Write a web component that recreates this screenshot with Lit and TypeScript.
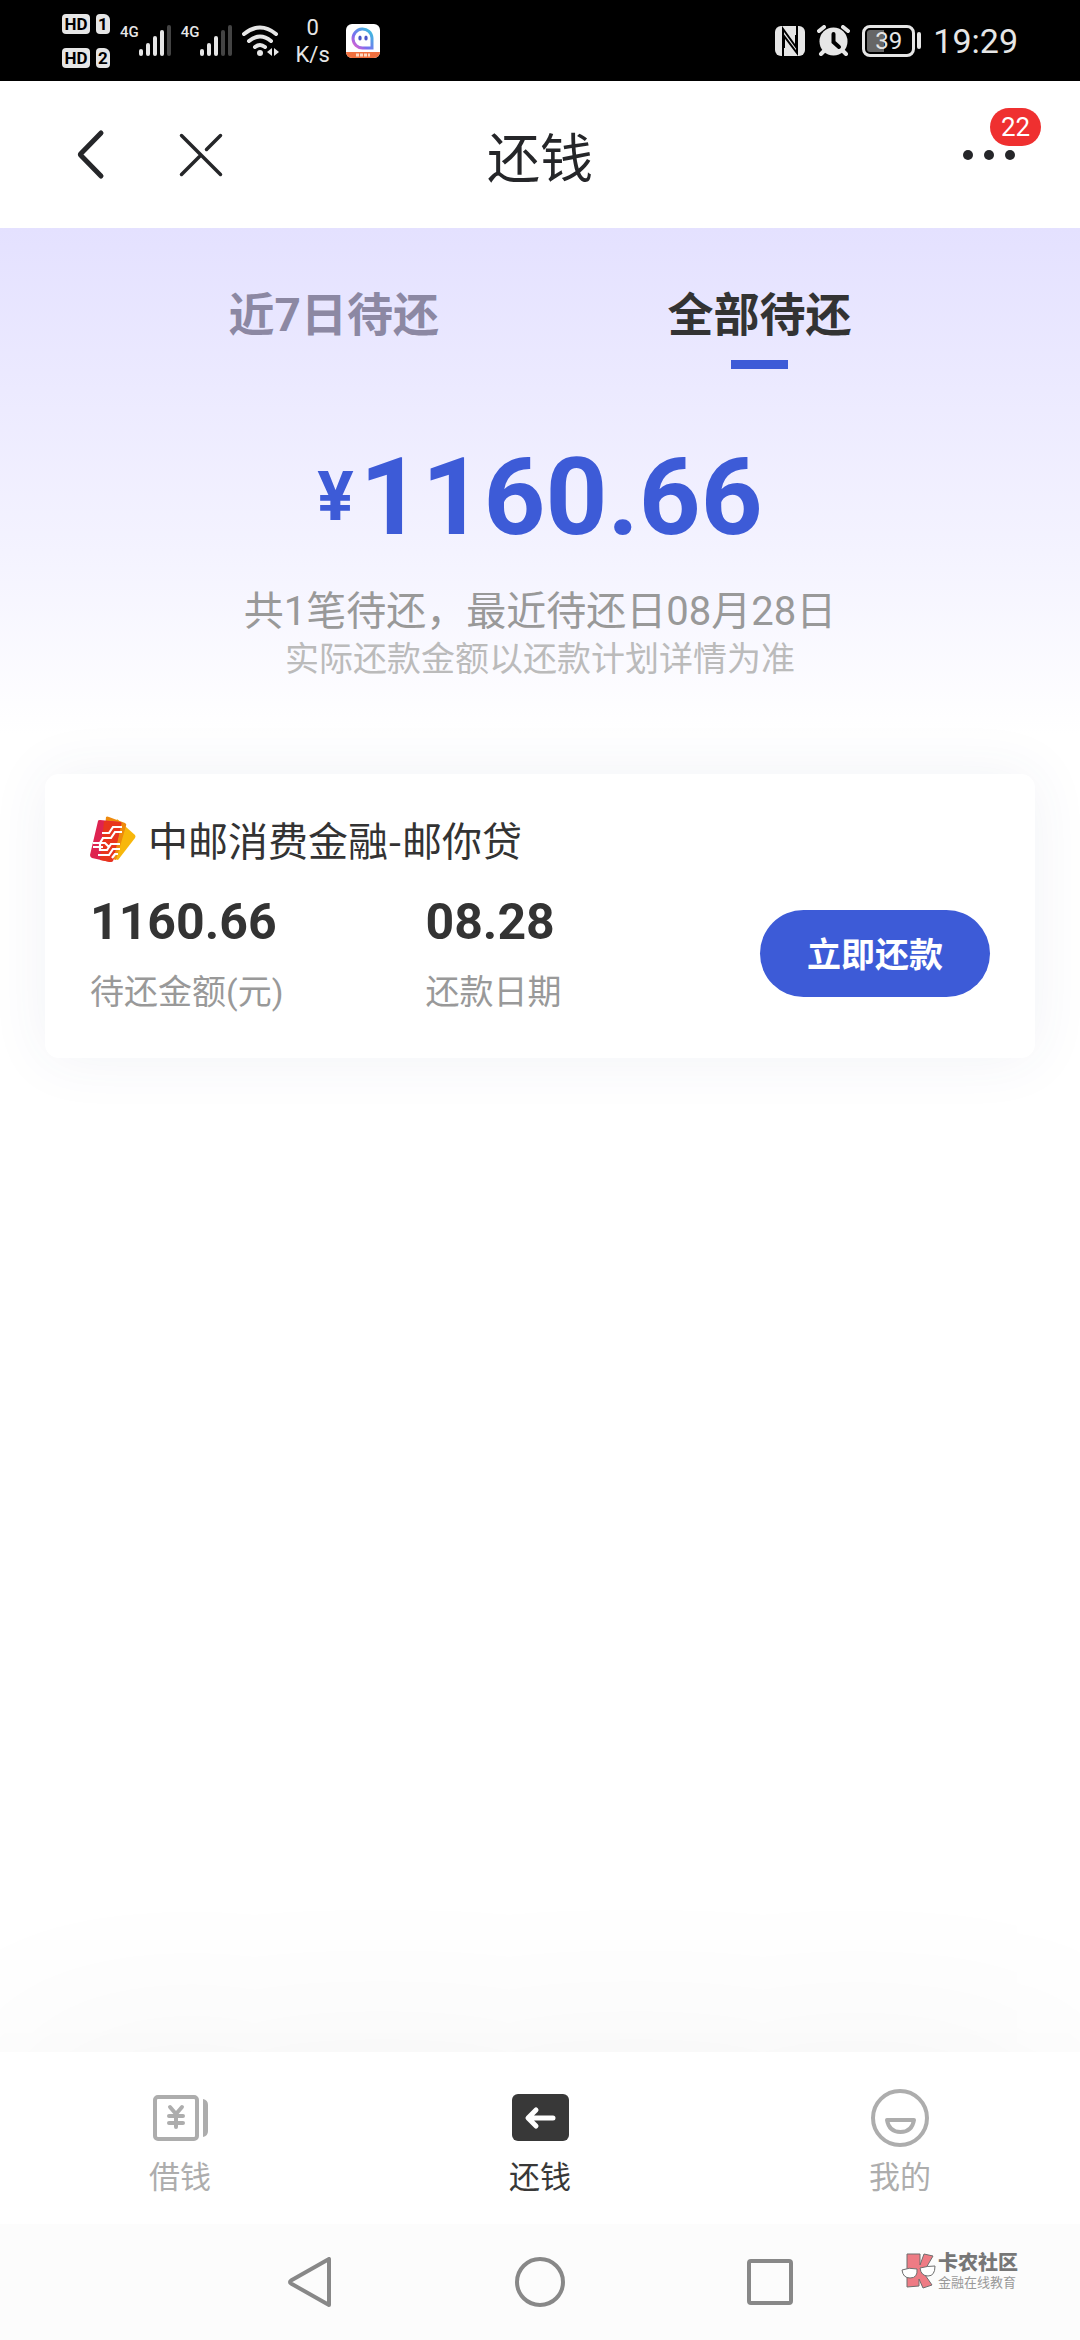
import { LitElement, html, css, svg } from "lit";
import { customElement, property, state } from "lit/decorators.js";
import { classMap } from "lit/directives/class-map.js";

const FONT = css`"Roboto", "Noto Sans CJK SC", sans-serif`;
const CJK = css`"Noto Sans CJK SC", sans-serif`;

@customElement("status-bar")
class StatusBar extends LitElement {
  static styles = css`
    :host {
      display: flex;
      align-items: center;
      justify-content: space-between;
      height: 81px;
      padding: 0 62px;
      background: #000;
      color: #e6e6e6;
      font-family: ${FONT};
    }
    .group { display: flex; align-items: center; }
    .left { gap: 10px; }
    .right { gap: 12px; }
    svg { display: block; flex: none; }
    .sims { display: grid; gap: 14px; }
    .sim { display: flex; gap: 6px; }
    .chip {
      display: block;
      height: 20px;
      border-radius: 4px;
      background: #e6e6e6;
      color: #000;
      font-size: 17px;
      line-height: 20px;
      font-weight: 700;
      text-align: center;
    }
    .hd { width: 28px; }
    .slot { width: 14px; border-top-right-radius: 6px; }
    .signal { display: flex; align-items: center; }
    .gen {
      font-weight: 500;
      font-size: 15px;
      line-height: 30px;
      height: 48px;
    }
    .speed {
      display: grid;
      text-align: center;
      font-size: 22px;
      line-height: 27px;
      padding: 0 6px;
    }
    .battery { display: flex; align-items: center; gap: 2px; }
    .cell {
      box-sizing: border-box;
      width: 53px;
      height: 32px;
      border: 3px solid #e6e6e6;
      border-radius: 8px;
      padding: 2px;
    }
    .charge {
      display: block;
      height: 22px;
      border-radius: 3px;
      background: linear-gradient(90deg, #666 39%, #000 39%);
      text-align: center;
      font-size: 24px;
      line-height: 23px;
    }
    .tip { width: 4px; height: 17px; border-radius: 2px; background: #e6e6e6; }
    .time { font-size: 34px; line-height: 50px; }
  `;

  private bars(active: number) {
    const tops = [24, 18, 11, 5, 0];
    return html`<svg width="32" height="31" viewBox="0 0 32 31" aria-hidden="true">
      ${tops.map(
        (t, i) => svg`<rect x=${i * 7} y=${t} width="4" height=${31 - t} rx="2"
          fill=${i < active ? "#e6e6e6" : "#444"}></rect>`
      )}
    </svg>`;
  }

  render() {
    return html`
      <div class="group left">
        <div class="sims">
          <div class="sim"><span class="chip hd">HD</span><span class="chip slot">1</span></div>
          <div class="sim"><span class="chip hd">HD</span><span class="chip slot">2</span></div>
        </div>
        <div class="signal"><span class="gen">4G</span>${this.bars(4)}</div>
        <div class="signal"><span class="gen">4G</span>${this.bars(3)}</div>
        <svg width="38" height="32" viewBox="0 0 38 32" fill="none" stroke="#e6e6e6" stroke-width="4" stroke-linecap="round" aria-hidden="true">
          <path d="M2 9Q18 -4 34 9M7 16Q18 7 29 16M13 22Q18 18 23 22"></path>
          <circle cx="18" cy="28" r="3" fill="#e6e6e6" stroke="none"></circle>
          <path d="M25 27l5-4v8zM32 23v8l5-4z" fill="#e6e6e6" stroke="none"></path>
        </svg>
        <div class="speed"><span>0</span><span>K/s</span></div>
        <svg width="34" height="34" viewBox="0 0 34 34" aria-hidden="true">
          <defs>
            <linearGradient id="ring" x1="0" y1="1" x2="1" y2="0">
              <stop offset="0" stop-color="#f05fc8"></stop>
              <stop offset=".35" stop-color="#7b6df0"></stop>
              <stop offset="1" stop-color="#35c5dc"></stop>
            </linearGradient>
          </defs>
          <rect width="34" height="34" rx="6" fill="#fff"></rect>
          <path d="M26 24V14A9.500 9.500 0 1 0 17 24H26Z" fill="none" stroke="url(#ring)" stroke-width="3"></path>
          <ellipse cx="14" cy="14" rx="1.700" ry="2.500" fill="#4a55c8"></ellipse>
          <ellipse cx="20" cy="14" rx="1.700" ry="2.500" fill="#4a55c8"></ellipse>
          <path d="M0 28H34A6 6 0 0 1 28 34H6A6 6 0 0 1 0 28Z" fill="#f0703f"></path>
          <path d="M10 31h14" stroke="#fbd9c4" stroke-width="3" stroke-dasharray="3 1"></path>
        </svg>
      </div>
      <div class="group right">
        <svg width="30" height="30" viewBox="0 0 30 30" aria-hidden="true">
          <rect width="30" height="30" rx="6" fill="#e6e6e6"></rect>
          <path d="M8 30V3L21 21V9M22 0V27L9 10V22" fill="none" stroke="#000" stroke-width="2"></path>
        </svg>
        <svg width="33" height="31" viewBox="0 0 33 31" aria-hidden="true">
          <circle cx="16.500" cy="16.500" r="14" fill="#e6e6e6"></circle>
          <path d="M2 6l5-4M31 6l-5-4M7 26l-3 3M26 26l3 3" stroke="#e6e6e6" stroke-width="4" stroke-linecap="round"></path>
          <path d="M16.500 9v8l5.500 5" fill="none" stroke="#000" stroke-width="4" stroke-linecap="round"></path>
        </svg>
        <div class="battery">
          <div class="cell"><span class="charge">39</span></div>
          <span class="tip"></span>
        </div>
        <span class="time">19:29</span>
      </div>
    `;
  }
}

@customElement("title-bar")
class TitleBar extends LitElement {
  @property() heading = "";
  @property({ type: Number }) unread = 0;

  static styles = css`
    :host {
      display: grid;
      grid-template-columns: 1fr auto 1fr;
      align-items: center;
      height: 147px;
      padding: 0 62px;
      background: #fff;
      color: #252629;
      font-family: ${CJK};
    }
    button {
      display: flex;
      align-items: center;
      justify-content: center;
      border: 0;
      padding: 0;
      background: none;
      color: inherit;
      width: 58px;
      height: 58px;
    }
    .leading { display: flex; gap: 52px; }
    h1 { margin: 0; font-size: 53px; line-height: 76px; font-weight: 400; }
    .more { position: relative; justify-self: end; }
    .badge {
      position: absolute;
      left: 30px;
      top: -18px;
      box-sizing: border-box;
      width: 51px;
      height: 38px;
      border-radius: 19px;
      background: #ef3030;
      color: #fff;
      font: 400 26px/39px ${FONT};
      text-align: center;
    }
  `;

  render() {
    return html`
      <div class="leading">
        <button aria-label="返回">
          <svg width="30" height="52" viewBox="0 0 30 52" fill="none" stroke="currentColor" stroke-width="5" stroke-linecap="round" stroke-linejoin="round">
            <path d="M25 4L5 24.500Q4 25.500 5 26.500L25 47"></path>
          </svg>
        </button>
        <button aria-label="关闭">
          <svg width="44" height="44" viewBox="0 0 44 44" fill="none" stroke="currentColor" stroke-width="3.500" stroke-linecap="round">
            <path d="M2.500 2.500L41.500 41.500M2.500 41.500L21 23M27.500 16.500L41.500 2.500"></path>
          </svg>
        </button>
      </div>
      <h1>${this.heading}</h1>
      <button class="more" aria-label="更多">
        <svg width="54" height="12" viewBox="0 0 54 12" fill="currentColor">
          <circle cx="6" cy="6" r="5"></circle>
          <circle cx="27" cy="6" r="5"></circle>
          <circle cx="48" cy="6" r="5"></circle>
        </svg>
        <span class="badge">${this.unread}</span>
      </button>
    `;
  }
}

@customElement("repay-summary")
class RepaySummary extends LitElement {
  @state() private active = 1;
  private tabs = ["近7日待还", "全部待还"];

  static styles = css`
    :host {
      display: block;
      padding: 53px 0 54px;
      background: linear-gradient(#e4e1ff, #f4f3ff 64%, #fff);
      text-align: center;
      font-family: ${FONT};
    }
    .tabs { display: flex; justify-content: space-evenly; }
    .tab {
      display: grid;
      justify-items: center;
      gap: 11px;
      border: 0;
      padding: 0;
      background: none;
      color: #8c88a3;
      font: 700 46px/68px ${FONT};
    }
    .tab::after { content: ""; width: 57px; height: 9px; }
    .on { color: #333; }
    .on::after { background: #3d5bd7; }
    .amount {
      display: flex;
      justify-content: center;
      align-items: center;
      gap: 6px;
      margin: 60px 0 22px;
      color: #3d5bd7;
      font: 700 108px/136px ${FONT};
    }
    .yen { font-size: 68px; }
    .due { margin: 0; color: #999; font-size: 40px; line-height: 50px; }
    .note { margin: 0; color: #bbb; font-size: 34px; line-height: 44px; }
  `;

  render() {
    return html`
      <div class="tabs" role="tablist">
        ${this.tabs.map(
          (t, i) => html`<button role="tab" aria-selected=${i === this.active}
            class=${classMap({ tab: true, on: i === this.active })}
            @click=${() => (this.active = i)}>${t}</button>`
        )}
      </div>
      <div class="amount"><span class="yen">¥</span><span>1160.66</span></div>
      <p class="due">共1笔待还，最近待还日08月28日</p>
      <p class="note">实际还款金额以还款计划详情为准</p>
    `;
  }
}

@customElement("loan-card")
class LoanCard extends LitElement {
  static styles = css`
    :host {
      display: block;
      margin: 39px 45px 0;
      padding: 35px 45px 38px;
      border-radius: 14px;
      background: #fff;
      box-shadow: 0 0 60px rgba(60, 70, 130, 0.07);
      color: #333;
      font-family: ${FONT};
    }
    .head { display: flex; align-items: center; gap: 12px; }
    h2 { margin: 0; font: 400 40px/60px ${CJK}; }
    .body {
      display: grid;
      grid-template-columns: 335fr 334fr auto;
      align-items: center;
      margin-top: 11px;
    }
    dl { margin: 0; display: flex; flex-direction: column-reverse; }
    dd { margin: 0; font: 700 50px/84px ${FONT}; }
    dt { color: #999; font-size: 34px; line-height: 56px; }
    button {
      border: 0;
      height: 87px;
      margin-top: 6px;
      padding: 0 47px;
      border-radius: 44px;
      background: #3d5bd7;
      color: #fff;
      font: 700 34px/50px ${CJK};
    }
  `;

  render() {
    return html`
      <div class="head">
        <svg width="46" height="46" viewBox="0 0 46 46" aria-hidden="true">
          <path d="M27 3L45 19Q46 20 45 22L28 44L16 40Z" fill="#f7b70b"></path>
          <path d="M16 1Q17 0 19 1L35 7Q37 8 36 10L26 44L12 40Z" fill="#ee8a0c"></path>
          <path d="M8 5Q8 4 10 4L30 6Q32 6 31 9L23 45Q22 46 20 46L2 42Q0 41 0 39Z" fill="#de2350"></path>
          <path d="M14 5L30 6Q32 6 31 9L23 45Q22 46 20 46L10 44Z" fill="#e8351c"></path>
          <path d="M32 11H23L19 17H12M32 16H25L21 22H12M3 27H15L19 31M3 31H13M30 28H21L17 34H10V27L13 22M30 33H23L19 39H8M28 38H25L22 42" fill="none" stroke="#fff" stroke-width="2.200"></path>
        </svg>
        <h2>中邮消费金融-邮你贷</h2>
      </div>
      <div class="body">
        <dl><dt>待还金额(元)</dt><dd>1160.66</dd></dl>
        <dl><dt>还款日期</dt><dd>08.28</dd></dl>
        <button>立即还款</button>
      </div>
    `;
  }
}

@customElement("tab-bar")
class TabBar extends LitElement {
  static styles = css`
    :host {
      position: relative;
      display: grid;
      grid-template-columns: repeat(3, 1fr);
      height: 172px;
      background: #fff;
      box-shadow: 0 0 200px rgba(0, 0, 0, 0.055);
      font-family: ${CJK};
    }
    a {
      display: flex;
      flex-direction: column;
      align-items: center;
      padding-top: 36px;
      color: #adadad;
      font-size: 31px;
      line-height: 54px;
      text-decoration: none;
    }
    .on { color: #383838; }
    svg { display: block; }
  `;

  render() {
    return html`
      <a href="#borrow">
        <svg width="60" height="60" viewBox="0 0 60 60" fill="none" stroke="currentColor" stroke-width="4" stroke-linecap="round">
          <rect x="5" y="9" width="42" height="42" rx="3"></rect>
          <path d="M20 19L26 26L32 19M26 26V39M19 28H33M19 35H33"></path>
          <path d="M53 11Q58 12 58 17V43Q58 48 53 49Z" fill="currentColor" stroke="none"></path>
        </svg>
        借钱
      </a>
      <a href="#repay" class="on" aria-current="page">
        <svg width="60" height="60" viewBox="0 0 60 60">
          <rect x="2" y="6" width="57" height="47" rx="6" fill="currentColor"></rect>
          <path d="M43 30H19M26 22L18 30L26 38" fill="none" stroke="#fff" stroke-width="5" stroke-linecap="round" stroke-linejoin="round"></path>
        </svg>
        还钱
      </a>
      <a href="#mine">
        <svg width="60" height="60" viewBox="0 0 60 60" fill="none" stroke="currentColor" stroke-width="4" stroke-linejoin="round">
          <circle cx="30" cy="30" r="27"></circle>
          <path d="M17 32H44Q42 44 30.500 44Q19 44 17 32Z"></path>
        </svg>
        我的
      </a>
    `;
  }
}

@customElement("system-nav")
class SystemNav extends LitElement {
  static styles = css`
    :host {
      position: relative;
      display: flex;
      justify-content: center;
      align-items: center;
      gap: 180px;
      height: 116px;
      background: #fcfcfc;
      font-family: ${FONT};
    }
    button { border: 0; padding: 0; background: none; color: #888; height: 50px; }
    svg { display: block; }
    .mark {
      position: absolute;
      right: 62px;
      top: 27px;
      display: flex;
      align-items: center;
      gap: 2px;
    }
    .name { display: block; color: #777; font-size: 20px; line-height: 24px; font-weight: 900; }
    .sub { display: block; color: #999; font-size: 13px; line-height: 16px; }
  `;

  render() {
    return html`
      <button aria-label="返回">
        <svg width="50" height="50" viewBox="0 0 50 50" fill="none" stroke="currentColor" stroke-width="4" stroke-linejoin="round">
          <path d="M44 2V48L6 26.500Q4 25 6 23.500Z"></path>
        </svg>
      </button>
      <button aria-label="主页">
        <svg width="50" height="50" viewBox="0 0 50 50" fill="none" stroke="currentColor" stroke-width="4">
          <circle cx="25" cy="25" r="23"></circle>
        </svg>
      </button>
      <button aria-label="最近任务">
        <svg width="50" height="50" viewBox="0 0 50 50" fill="none" stroke="currentColor" stroke-width="4">
          <rect x="4" y="4" width="42" height="42" rx="2"></rect>
        </svg>
      </button>
      <div class="mark">
        <svg width="35" height="36" viewBox="0 0 35 36" stroke="#6e6e6e" aria-hidden="true">
          <path d="M6 1H19V12L23 1L32 3L25 15L22 19L31 32L22 35L18 26V33L6 34Z" fill="#ee7b84"></path>
          <path d="M1 17Q8 14 16 16Q17 25 9 25Q2 25 1 17Z" fill="#fff"></path>
          <path d="M19 15Q26 13 34 13Q34 23 27 23Q20 23 19 15Z" fill="#fff"></path>
        </svg>
        <div><span class="name">卡农社区</span><span class="sub">金融在线教育</span></div>
      </div>
    `;
  }
}

@customElement("app-root")
class AppRoot extends LitElement {
  static styles = css`
    :host {
      display: flex;
      flex-direction: column;
      min-height: 100vh;
      background: #fff;
    }
    main { flex: 1; }
  `;

  render() {
    return html`
      <status-bar></status-bar>
      <title-bar heading="还钱" unread="22"></title-bar>
      <main>
        <repay-summary></repay-summary>
        <loan-card></loan-card>
      </main>
      <tab-bar></tab-bar>
      <system-nav></system-nav>
    `;
  }
}
